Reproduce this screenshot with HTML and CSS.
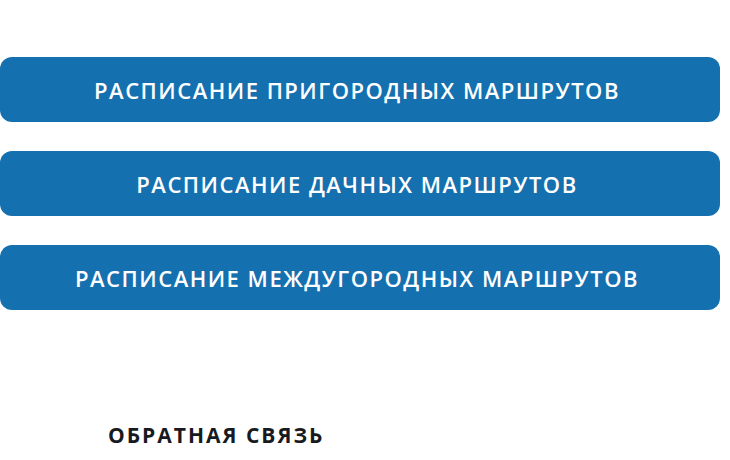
FILE: index.html
```html
<!DOCTYPE html>
<html lang="ru">
<head>
<meta charset="utf-8">
<link rel="stylesheet" href="styles.css">
</head>
<body>
<main class="page">
  <nav class="routes">
    <a class="route-btn" href="#">РАСПИСАНИЕ ПРИГОРОДНЫХ МАРШРУТОВ</a>
    <a class="route-btn" href="#">РАСПИСАНИЕ ДАЧНЫХ МАРШРУТОВ</a>
    <a class="route-btn" href="#">РАСПИСАНИЕ МЕЖДУГОРОДНЫХ МАРШРУТОВ</a>
  </nav>
  <footer class="footer">
    <h2 class="footer-title">ОБРАТНАЯ СВЯЗЬ</h2>
  </footer>
</main>
</body>
</html>
```

FILE: styles.css
```css
html, body {
  margin: 0;
  padding: 0;
  background: #ffffff;
}
.page {
  width: 730px;
  height: 460px;
  overflow: hidden;
  font-family: "Open Sans", "DejaVu Sans", sans-serif;
}
.routes {
  display: flex;
  flex-direction: column;
  gap: 29px;
  padding-top: 57px;
  width: 720px;
}
.route-btn {
  display: flex;
  align-items: center;
  justify-content: center;
  height: 65px;
  padding-right: 6px;
  background: #1570b0;
  border-radius: 12px;
  color: #ffffff;
  text-decoration: none;
  font-size: 22px;
  font-weight: 600;
  letter-spacing: 1.5px;
}
.footer {
  padding: 111px 0 0 108px;
}
.footer-title {
  margin: 0;
  font-size: 21px;
  font-weight: 700;
  letter-spacing: 2px;
  color: #171a21;
}
```
